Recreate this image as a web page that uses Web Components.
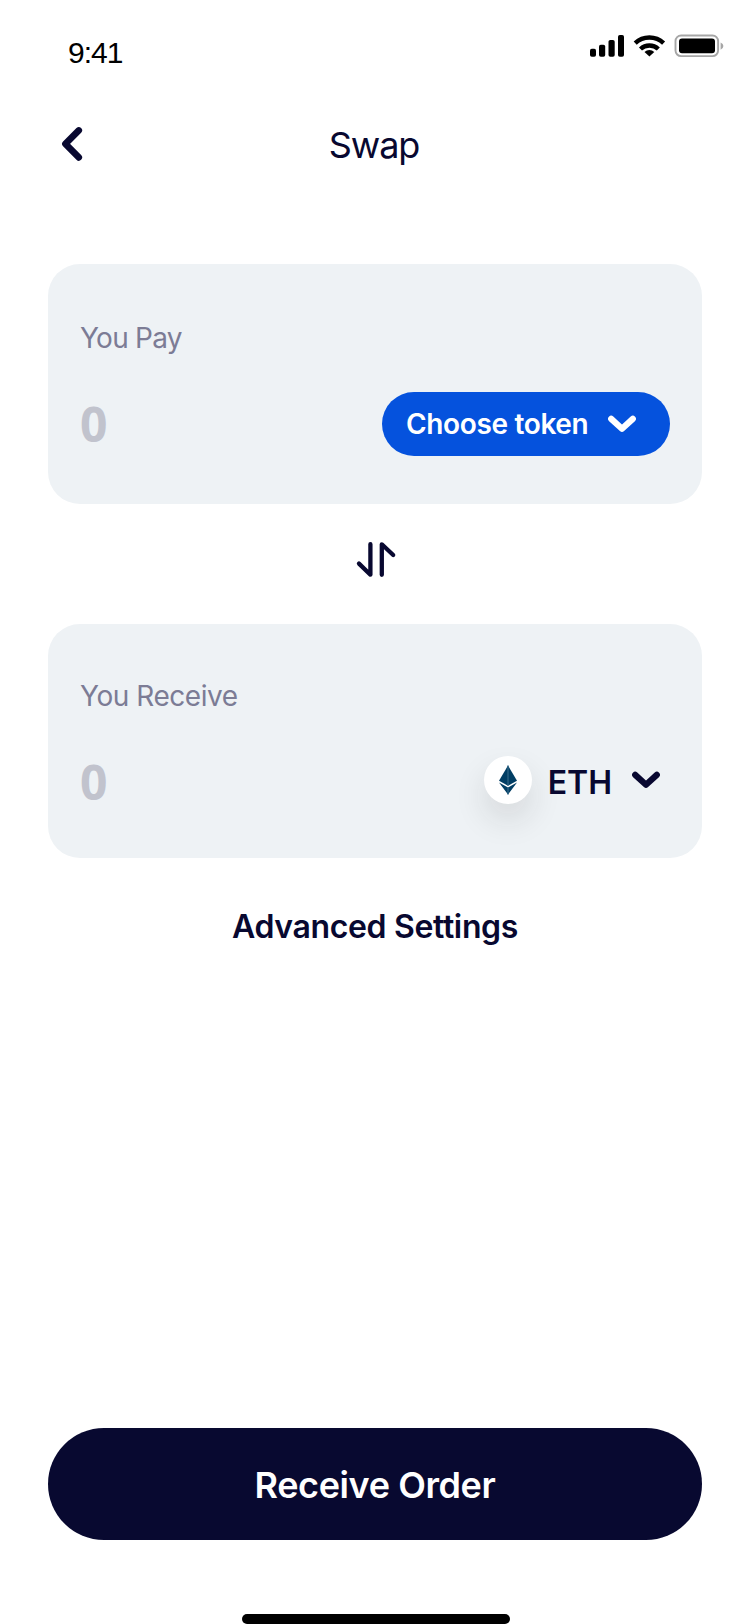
<!DOCTYPE html>
<html lang="en">
<head>
<meta charset="utf-8">
<title>Swap</title>
<style>
  body { margin: 0; background: #fff; color: #080830; font-family: Inter, "Noto Sans", sans-serif; }
</style>
</head>
<body>
<swap-screen></swap-screen>

<template id="swap-screen">
  <style>
    :host { display: flex; flex-direction: column; width: 750px; height: 1624px; overflow: hidden; }
    main { display: flex; flex-direction: column; padding: 72px 48px 0; }
    .link { font-size: 32px; font-weight: 600; line-height: 48px; letter-spacing: -.35px; text-align: center; margin-top: 45px; }
    footer { margin-top: auto; padding: 0 48px; display: grid; gap: 74px; }
    .home { justify-self: center; width: 268px; height: 10px; border-radius: 5px; background: #000; margin-left: 2px; }
  </style>
  <status-bar></status-bar>
  <nav-header>Swap</nav-header>
  <main>
    <amount-card style="--top:52px;--gap:32px;--bottom:48px;--tracking:-.75px">
      <span slot="label">You Pay</span>
      <span slot="amount">0</span>
      <token-pill slot="token">Choose token</token-pill>
    </amount-card>
    <swap-arrows></swap-arrows>
    <amount-card style="--top:50px;--gap:32px;--bottom:44px;--tracking:-.45px">
      <span slot="label">You Receive</span>
      <span slot="amount">0</span>
      <token-select slot="token">ETH</token-select>
    </amount-card>
    <div class="link">Advanced Settings</div>
  </main>
  <footer>
    <primary-button>Receive Order</primary-button>
    <div class="home"></div>
  </footer>
</template>

<template id="status-bar">
  <style>
    :host { display: flex; justify-content: space-between; height: 96px; padding: 0 26px 0 68px; box-sizing: border-box; color: #000; }
    time { font: 30px/36px "Liberation Sans", Arial, sans-serif; letter-spacing: -1px; margin-top: 35px; }
    svg { display: block; margin-top: 32px; }
  </style>
  <time>9:41</time>
  <svg width="136" height="28" viewBox="588 32 136 28">
    <rect x="590" y="48.7" width="6" height="8" rx="1.8"/>
    <rect x="599" y="44.7" width="6.2" height="12" rx="1.8"/>
    <rect x="608.5" y="40" width="6.2" height="16.7" rx="1.8"/>
    <rect x="618" y="35" width="6" height="21.7" rx="1.8"/>
    <g fill="none" stroke="#000" stroke-width="4.4">
      <path d="M635.2 43.2a20.6 20.6 0 0 1 28.4 0"/>
      <path d="M640.5 49a13 13 0 0 1 17.8 0"/>
    </g>
    <path d="M649.4 56.6l-4.9-4.7a7.4 7.4 0 0 1 9.8 0z"/>
    <rect x="675.5" y="35.5" width="42.6" height="20.6" rx="5.6" fill="none" stroke="#a6a6a6" stroke-width="1.9"/>
    <rect x="679" y="38.6" width="36" height="14.6" rx="3"/>
    <path d="M720.6 42.4q2.8 1.2 2.8 3.7t-2.8 3.7z" fill="#a6a6a6"/>
  </svg>
</template>

<template id="nav-header">
  <style>
    :host { display: grid; grid-template-columns: 1fr auto 1fr; align-items: center; height: 96px; padding: 0 48px; }
    h1 { margin: 1px 2px 0 0; font-size: 36px; font-weight: 400; line-height: 44px; letter-spacing: -1.1px; }
    svg { display: block; margin-left: 8px; }
  </style>
  <svg width="32" height="48" viewBox="56 120 32 48" fill="none" stroke="#080830" stroke-width="6.6" stroke-linecap="round" stroke-linejoin="round"><path d="M78.8 130.4L65.4 143.9L78.8 157.4"/></svg>
  <h1><slot></slot></h1>
</template>

<template id="amount-card">
  <style>
    :host { display: block; background: #eef2f5; border-radius: 32px; padding: var(--top) 32px var(--bottom); }
    .label { color: #7c7c95; font-size: 28px; line-height: 44px; letter-spacing: var(--tracking); }
    .row { display: flex; justify-content: space-between; align-items: center; height: 64px; margin-top: var(--gap); }
    .amount { color: #c1c3cd; font: 680 48px/64px "Open Sans", "Noto Sans", sans-serif; }
  </style>
  <div class="label"><slot name="label"></slot></div>
  <div class="row">
    <div class="amount"><slot name="amount"></slot></div>
    <slot name="token"></slot>
  </div>
</template>

<template id="chevron-down">
  <style>:host { display: block; } svg { display: block; }</style>
  <svg width="28" height="20" viewBox="0 0 28 20" fill="none" stroke="currentColor" stroke-width="6.2" stroke-linecap="round" stroke-linejoin="round"><path d="M3.2 4.9L14 14.8L24.8 4.9"/></svg>
</template>

<template id="token-pill">
  <style>
    :host { display: flex; align-items: center; justify-content: space-between; width: 288px; height: 64px; box-sizing: border-box; padding: 0 34px 0 24px; border-radius: 32px; background: #0552dd; color: #fff; font-size: 28px; font-weight: 600; line-height: 40px; letter-spacing: -.35px; white-space: nowrap; }
  </style>
  <span><slot></slot></span><chevron-down></chevron-down>
</template>

<template id="token-select">
  <style>
    :host { display: flex; align-items: center; padding-right: 10px; color: #080830; font-size: 32px; font-weight: 600; line-height: 40px; letter-spacing: 0; }
    .coin { display: grid; place-items: center; width: 48px; height: 48px; border-radius: 50%; background: #fff; box-shadow: 0 16px 32px rgba(32, 32, 32, .12); margin: 0 16px 4px 0; }
    .name { margin-top: 2px; }
    chevron-down { margin: 0 0 4px 20px; }
    svg { display: block; }
  </style>
  <div class="coin">
    <svg width="20" height="30" viewBox="0 0 20 30">
      <path d="M10 .5L19 15.7L10 20.7L1 15.7z" fill="#023e64"/>
      <path d="M1 17.4L10 22.5L19 17.4L10 29.5z" fill="#023e64"/>
      <path d="M10 .5V20.7M10 22.5V29.5" stroke="#2e6484" stroke-width="1.3"/>
    </svg>
  </div>
  <span class="name"><slot></slot></span><chevron-down></chevron-down>
</template>

<template id="swap-arrows">
  <style>:host { display: grid; place-items: center; height: 120px; padding-bottom: 8px; box-sizing: border-box; } svg { display: block; }</style>
  <svg width="48" height="48" viewBox="351 536 48 48" fill="none" stroke="#080830" stroke-width="4.3" stroke-linecap="round" stroke-linejoin="round"><path d="M370.4 544.2V574.7L359 563.6M381.8 574.8V544.3L393.2 555"/></svg>
</template>

<template id="primary-button">
  <style>
    :host { display: flex; align-items: center; justify-content: center; height: 112px; border-radius: 56px; background: #080930; color: #fff; font-size: 36px; font-weight: 600; line-height: 44px; letter-spacing: -.4px; }
    span { margin-top: 2px; }
  </style>
  <span><slot></slot></span>
</template>

<script>
  for (const template of document.querySelectorAll('template')) {
    customElements.define(template.id, class extends HTMLElement {
      constructor() {
        super();
        this.attachShadow({ mode: 'open' }).append(template.content.cloneNode(true));
      }
    });
  }
</script>
</body>
</html>
